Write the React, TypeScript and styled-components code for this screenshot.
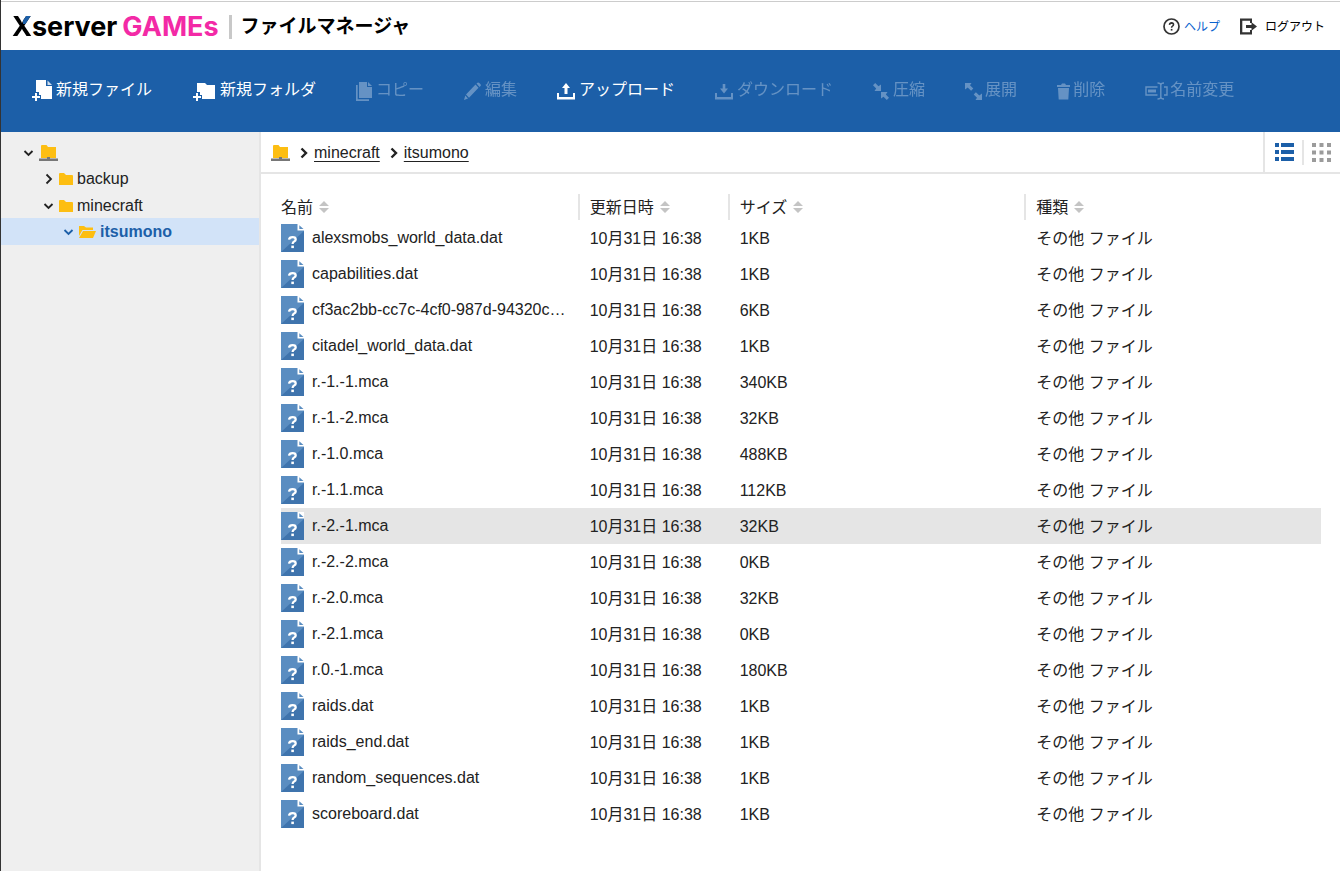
import React, { useState } from "react";
import styled, { createGlobalStyle } from "styled-components";

const blue = "#1c5fa8";
const line = "#e5e5e5";
const amber = "#fdbe12";

const GlobalStyle = createGlobalStyle`
  *, *::before, *::after { box-sizing: border-box; }
  body {
    margin: 0;
    background: #fff;
    color: #222;
    font-family: "Liberation Sans", "Noto Sans CJK JP", sans-serif;
    font-size: 16px;
    line-height: 24px;
  }
  button {
    margin: 0;
    padding: 0;
    border: 0;
    background: none;
    color: inherit;
    font: inherit;
    cursor: pointer;
  }
  svg { display: block; flex: none; }
`;

const Page = styled.div`
  display: flex;
  flex-direction: column;
  min-height: 100vh;
  border-left: 1px solid #333;
`;

const Header = styled.header`
  display: flex;
  align-items: center;
  justify-content: space-between;
  height: 50px;
  padding: 2px 15px 0 11px;
  box-shadow: inset 0 2px 0 -1px #ccc;
  border-top: 1px solid #fff;
`;

const Brand = styled.h1`
  display: flex;
  align-items: center;
  margin: 0;
  font-size: 19px;
  font-weight: 700;
  color: #000;
`;

const Logo = styled.span`
  font-family: Inter, sans-serif;
  font-size: 27px;
  font-weight: 700;
  line-height: 32px;
`;

const LogoX = styled.span`
  background: linear-gradient(${blue}, ${blue}) right top / 47% 43% no-repeat, linear-gradient(#000, #000);
  background-clip: text;
  -webkit-background-clip: text;
  color: transparent;
`;

const LogoPink = styled.span`
  margin-left: 5px;
  color: #f32aa6;
`;

const BrandTitle = styled.span`
  margin-left: 10px;
  padding-left: 9px;
  border-left: 3px solid #c8c8c8;
`;

const HeaderLinks = styled.nav`
  display: flex;
  gap: 20px;
`;

const HeaderLink = styled.a<{ $color: string }>`
  display: flex;
  align-items: center;
  gap: 4px;
  color: ${(p) => p.$color};
  font-size: 12px;
  text-decoration: none;
`;

const Toolbar = styled.div`
  display: flex;
  align-items: center;
  height: 82px;
  padding: 0 11px;
  background: ${blue};
`;

const Tool = styled.button<{ $slot: number }>`
  display: grid;
  grid-template-columns: ${(p) => p.$slot}px auto;
  align-items: center;
  padding: 0 20px;
  color: #fff;
  white-space: nowrap;
  &:disabled { opacity: 0.32; cursor: default; }
`;

const ToolLabel = styled.span`
  padding-bottom: 2px;
`;

const Body = styled.div`
  display: flex;
  flex: 1;
`;

const Sidebar = styled.nav`
  flex: none;
  width: 260px;
  padding-top: 5px;
  background: #efefef;
  border-right: 2px solid ${line};
`;

const TreeRow = styled.button<{ $depth: number; $active?: boolean }>`
  display: flex;
  align-items: center;
  gap: 4px;
  width: 100%;
  height: 27px;
  padding-top: ${(p) => (p.$depth === 0 ? 5 : p.$depth === 1 ? 2 : 0)}px;
  padding-left: ${(p) => 22 + p.$depth * 20}px;
  background: ${(p) => (p.$active ? "#d2e3f8" : "none")};
  color: ${(p) => (p.$active ? blue : "#222")};
  font-weight: ${(p) => (p.$active ? 700 : 400)};
`;

const Main = styled.main`
  flex: 1;
  min-width: 0;
`;

const PathBar = styled.div`
  display: flex;
  justify-content: space-between;
  height: 42px;
  border-bottom: 2px solid ${line};
`;

const Crumbs = styled.nav`
  display: flex;
  align-items: center;
  gap: 4px;
  padding: 2px 0 0 10px;
`;

const Crumb = styled.a`
  margin-right: 4px;
  color: #222;
  text-underline-offset: 3px;
`;

const RootLink = styled.a`
  margin-right: 4px;
`;

const ViewSwitch = styled.div`
  display: flex;
  align-items: center;
  padding: 0 9px 0 10px;
  border-left: 2px solid ${line};
`;

const ViewButton = styled.button<{ $active: boolean }>`
  color: ${(p) => (p.$active ? blue : "#9b9b9b")};
  & + & {
    margin-left: 8px;
    padding: 3px 0 3px 8px;
    border-left: 2px solid ${line};
  }
`;

const TableWrap = styled.div`
  padding: 14px 19px 20px 20px;
`;

const FileTable = styled.table`
  width: 100%;
  table-layout: fixed;
  border-collapse: collapse;
`;

const HeadCell = styled.th<{ $width?: number }>`
  width: ${(p) => (p.$width ? `${p.$width}px` : "auto")};
  height: 32px;
  padding: 6px 0 0;
  text-align: left;
  font-weight: 400;
`;

const SortButton = styled.button<{ $first: boolean }>`
  display: flex;
  align-items: center;
  gap: 6px;
  height: 26px;
  padding-left: ${(p) => (p.$first ? 0 : 10)}px;
  border-left: ${(p) => (p.$first ? "0" : `2px solid ${line}`)};
`;

const SortLabel = styled.span`
  padding-top: 2px;
`;

const Row = styled.tr<{ $hover: boolean }>`
  background: ${(p) => (p.$hover ? "#e5e5e5" : "transparent")};
`;

const Cell = styled.td`
  height: 36px;
  padding: 2px 0 0 12px;
  white-space: nowrap;
`;

const NameCell = styled(Cell)`
  padding: 0 8px 0 0;
`;

const FileName = styled.div`
  display: flex;
  align-items: center;
  gap: 8px;
`;

const FileAddIcon = () => (
  <svg width="20" height="22" viewBox="0 0 20 22" fill="currentColor">
    <path d="M4 0h10v6h6v13H9v-4H7v-3H4z" />
    <path d="M15.500 0.500l4.500 4.500h-4.500z" opacity="0.8" />
    <path d="M3 13h2v3h3v2H5v3H3v-3H0v-2h3z" />
  </svg>
);

const FolderAddIcon = () => (
  <svg width="24" height="20" viewBox="0 0 24 20" fill="currentColor">
    <path d="M5 2h8l2 2h8v14H10v-4H8v-3H5z" />
    <path d="M4 12h2v3h3v2H6v3H4v-3H1v-2h3z" />
  </svg>
);

const CopyIcon = () => (
  <svg width="17" height="20" viewBox="0 0 17 20" fill="currentColor">
    <path d="M3 1h8v5h5v11H3z" />
    <path d="M12 1l4 4h-4z" />
    <path d="M0 4h1.700v14.300H13V20H0z" />
  </svg>
);

const EditIcon = () => (
  <svg width="17" height="18" viewBox="0 0 17 18" fill="currentColor">
    <path d="M12.500 1.500l1-.8q1-.4 1.800.3l1.200 1.300q.7.900 0 1.700l-1 1zM11.500 2.600l3 3.200L5 15.700l-3-3.200zM1.300 13.500L4 16.500 0 18z" />
  </svg>
);

const UploadIcon = () => (
  <svg width="18" height="18" viewBox="0 0 18 18" fill="currentColor">
    <path d="M9 1l4 5h-2.500v6h-3V6H5z" />
    <path d="M0 11h2v4h14v-4h2v6.500H0z" />
  </svg>
);

const DownloadIcon = () => (
  <svg width="18" height="18" viewBox="0 0 18 18" fill="currentColor">
    <path d="M7.700 2h2.600v4.500H13l-4 5-4-5h2.700z" />
    <path d="M0 11h2v4h14v-4h2v6.500H0z" />
  </svg>
);

const CompressIcon = () => (
  <svg width="16" height="17" viewBox="0 0 16 17" fill="currentColor">
    <path d="M0 2.200L2.200 0 5.500 3.200 8 1.500V8H1.500l1.700-2.500z" />
    <path d="M16 14.800L13.800 17l-3.300-3.200L8 15.500V9h6.500l-1.700 2.500z" />
  </svg>
);

const ExpandIcon = () => (
  <svg width="17" height="17" viewBox="0 0 17 17" fill="currentColor">
    <path d="M0 0h6.500L5 2.300l3.300 3.300-2.200 2.200L2.700 4.500 0 6.500z" />
    <path d="M17 17h-6.500l1.500-2.300-3.300-3.300 2.200-2.200 3.400 3.300 2.700-2z" />
  </svg>
);

const TrashIcon = () => (
  <svg width="13" height="17" viewBox="0 0 13 17" fill="currentColor">
    <path d="M0 2h4l1-1.500h3L9 2h4v2H0zM1 5h11l-.700 11.500H1.700z" />
  </svg>
);

const RenameIcon = () => (
  <svg width="23" height="18" viewBox="0 0 23 18" fill="none" stroke="currentColor" strokeWidth="1.400">
    <path d="M12.500 5H1v8h11.500M19 5h3v8h-3" />
    <path d="M3 9h8" strokeWidth="3" />
    <path d="M12.500 1q3.300 0 3.300 2v12q0 2-3.300 2M19 1q-3.200 0-3.200 2v12q0 2 3.200 2" />
  </svg>
);

const HelpIcon = () => (
  <svg width="17" height="17" viewBox="0 0 17 17" fill="none" stroke="#333">
    <circle cx="8.500" cy="8.500" r="7.500" strokeWidth="1.700" />
    <path d="M6.500 6.800q.2-1.900 2.100-1.900 1.900.1 1.900 1.700 0 .9-1 1.500-.9.500-.9 1.600" strokeWidth="1.600" />
    <path d="M8.600 10.900v1.700" strokeWidth="1.700" />
  </svg>
);

const LogoutIcon = () => (
  <svg width="21" height="17" viewBox="0 0 21 17" fill="#333">
    <path d="M0 0.500h12V5h-2V2.700H2.300v11.600H10V12h2v4.500H0z" />
    <path d="M6 7h5.500V4.200L17 8.500l-5.500 4.300V10H6z" />
  </svg>
);

const RootIcon = () => (
  <svg width="19" height="16" viewBox="0 0 19 16">
    <path d="M2 1q0-1 1-1h4.500l1.500 2H17v11H2z" fill={amber} />
    <path d="M0 13.500h8V12h3v1.500h8V16H0z" fill="#777" />
  </svg>
);

const FolderIcon = () => (
  <svg width="14" height="12" viewBox="0 0 14 12">
    <path d="M0 1q0-1 1-1h4l2 2h6q1 0 1 1v9H0z" fill={amber} />
  </svg>
);

const OpenFolderIcon = () => (
  <svg width="17" height="13" viewBox="0 0 17 13" fill={amber}>
    <path d="M0 1h5l2 1.500h7V5H3.500L0 11z" />
    <path d="M4 6h13l-3 7H0z" />
  </svg>
);

const Chevron = ({ open, strong }: { open?: boolean; strong?: boolean }) => (
  <svg width="12" height="12" viewBox="0 0 12 12" fill="none" stroke="currentColor" strokeWidth={strong ? 2.4 : 1.8}>
    <path d={open ? "M1.500 4l4 4 4-4" : "M3.500 1.500L8 6l-4.500 4.500"} />
  </svg>
);

const SortIcon = () => (
  <svg width="10" height="12" viewBox="0 0 10 12" fill="#c4c4c4">
    <path d="M5 0l5 5H0zM0 7h10l-5 5z" />
  </svg>
);

const ListIcon = () => (
  <svg width="19" height="18" viewBox="0 0 19 18" fill="currentColor">
    <path d="M0 0h4v4H0zM6 0h13v4H6zM0 7h4v4H0zM6 7h13v4H6zM0 14h4v4H0zM6 14h13v4H6z" />
  </svg>
);

const GridIcon = () => (
  <svg width="19" height="19" viewBox="0 0 19 19" fill="currentColor">
    <path d="M0 0h4v4H0zM7.500 0h4v4h-4zM15 0h4v4h-4zM0 7.500h4v4H0zM7.500 7.500h4v4h-4zM15 7.500h4v4h-4zM0 15h4v4H0zM7.500 15h4v4h-4zM15 15h4v4h-4z" />
  </svg>
);

const UnknownFileIcon = () => (
  <svg width="23" height="28" viewBox="0 0 23 28">
    <path d="M0 0h17l6 6v22H0z" fill="#5a8dc1" />
    <path d="M23 7v21H0z" fill="#3f74ad" />
    <path d="M16.500 0H23v6.500h-6.500z" fill="#fff" />
    <path d="M18.300 1.200L22.500 5h-4.200z" fill="#5a8dc1" />
    <path d="M8 15.600q.4-2.500 3.600-2.500 3.100 0 3.100 2.300 0 1.300-1.600 2.200-1.500.8-1.500 2.300" fill="none" stroke="#fff" strokeWidth="2.300" />
    <path d="M10.300 21.600h2.600v2.500h-2.600z" fill="#fff" />
  </svg>
);

type ToolItem = { label: string; slot: number; icon: React.ReactNode; enabled?: boolean };

const tools: ToolItem[] = [
  { label: "新規ファイル", slot: 24, icon: <FileAddIcon />, enabled: true },
  { label: "新規フォルダ", slot: 28, icon: <FolderAddIcon />, enabled: true },
  { label: "コピー", slot: 20, icon: <CopyIcon /> },
  { label: "編集", slot: 21, icon: <EditIcon /> },
  { label: "アップロード", slot: 22, icon: <UploadIcon />, enabled: true },
  { label: "ダウンロード", slot: 22, icon: <DownloadIcon /> },
  { label: "圧縮", slot: 20, icon: <CompressIcon /> },
  { label: "展開", slot: 20, icon: <ExpandIcon /> },
  { label: "削除", slot: 16, icon: <TrashIcon /> },
  { label: "名前変更", slot: 25, icon: <RenameIcon /> },
];

const files: [string, string][] = [
  ["alexsmobs_world_data.dat", "1KB"],
  ["capabilities.dat", "1KB"],
  ["cf3ac2bb-cc7c-4cf0-987d-94320c…", "6KB"],
  ["citadel_world_data.dat", "1KB"],
  ["r.-1.-1.mca", "340KB"],
  ["r.-1.-2.mca", "32KB"],
  ["r.-1.0.mca", "488KB"],
  ["r.-1.1.mca", "112KB"],
  ["r.-2.-1.mca", "32KB"],
  ["r.-2.-2.mca", "0KB"],
  ["r.-2.0.mca", "32KB"],
  ["r.-2.1.mca", "0KB"],
  ["r.0.-1.mca", "180KB"],
  ["raids.dat", "1KB"],
  ["raids_end.dat", "1KB"],
  ["random_sequences.dat", "1KB"],
  ["scoreboard.dat", "1KB"],
];

const columns: { label: string; width?: number }[] = [
  { label: "名前" },
  { label: "更新日時", width: 150 },
  { label: "サイズ" },
  { label: "種類" },
];

export default function App() {
  const [hovered, setHovered] = useState(8);
  const [view, setView] = useState("list");

  return (
    <>
      <GlobalStyle />
      <Page>
        <Header>
          <Brand>
            <Logo>
              <LogoX>X</LogoX>server<LogoPink>GAMEs</LogoPink>
            </Logo>
            <BrandTitle>ファイルマネージャ</BrandTitle>
          </Brand>
          <HeaderLinks>
            <HeaderLink href="#help" $color="#0b63ce"><HelpIcon />ヘルプ</HeaderLink>
            <HeaderLink href="#logout" $color="#000"><LogoutIcon />ログアウト</HeaderLink>
          </HeaderLinks>
        </Header>

        <Toolbar>
          {tools.map((tool) => (
            <Tool key={tool.label} type="button" $slot={tool.slot} disabled={!tool.enabled}>
              {tool.icon}
              <ToolLabel>{tool.label}</ToolLabel>
            </Tool>
          ))}
        </Toolbar>

        <Body>
          <Sidebar>
            <TreeRow type="button" $depth={0} aria-label="ルート"><Chevron open /><RootIcon /></TreeRow>
            <TreeRow type="button" $depth={1}><Chevron /><FolderIcon />backup</TreeRow>
            <TreeRow type="button" $depth={1}><Chevron open /><FolderIcon />minecraft</TreeRow>
            <TreeRow type="button" $depth={2} $active><Chevron open /><OpenFolderIcon />itsumono</TreeRow>
          </Sidebar>

          <Main>
            <PathBar>
              <Crumbs>
                <RootLink href="#root" aria-label="ルート"><RootIcon /></RootLink>
                <Chevron strong />
                <Crumb href="#minecraft">minecraft</Crumb>
                <Chevron strong />
                <Crumb href="#itsumono">itsumono</Crumb>
              </Crumbs>
              <ViewSwitch>
                <ViewButton type="button" aria-label="リスト表示" $active={view === "list"} onClick={() => setView("list")}>
                  <ListIcon />
                </ViewButton>
                <ViewButton type="button" aria-label="アイコン表示" $active={view === "grid"} onClick={() => setView("grid")}>
                  <GridIcon />
                </ViewButton>
              </ViewSwitch>
            </PathBar>

            <TableWrap>
              <FileTable>
                <thead>
                  <tr>
                    {columns.map((column, i) => (
                      <HeadCell key={column.label} $width={column.width}>
                        <SortButton type="button" $first={i === 0}>
                          <SortLabel>{column.label}</SortLabel>
                          <SortIcon />
                        </SortButton>
                      </HeadCell>
                    ))}
                  </tr>
                </thead>
                <tbody>
                  {files.map(([name, size], i) => (
                    <Row key={name} $hover={hovered === i} onMouseEnter={() => setHovered(i)}>
                      <NameCell>
                        <FileName><UnknownFileIcon />{name}</FileName>
                      </NameCell>
                      <Cell>10月31日 16:38</Cell>
                      <Cell>{size}</Cell>
                      <Cell>その他 ファイル</Cell>
                    </Row>
                  ))}
                </tbody>
              </FileTable>
            </TableWrap>
          </Main>
        </Body>
      </Page>
    </>
  );
}
